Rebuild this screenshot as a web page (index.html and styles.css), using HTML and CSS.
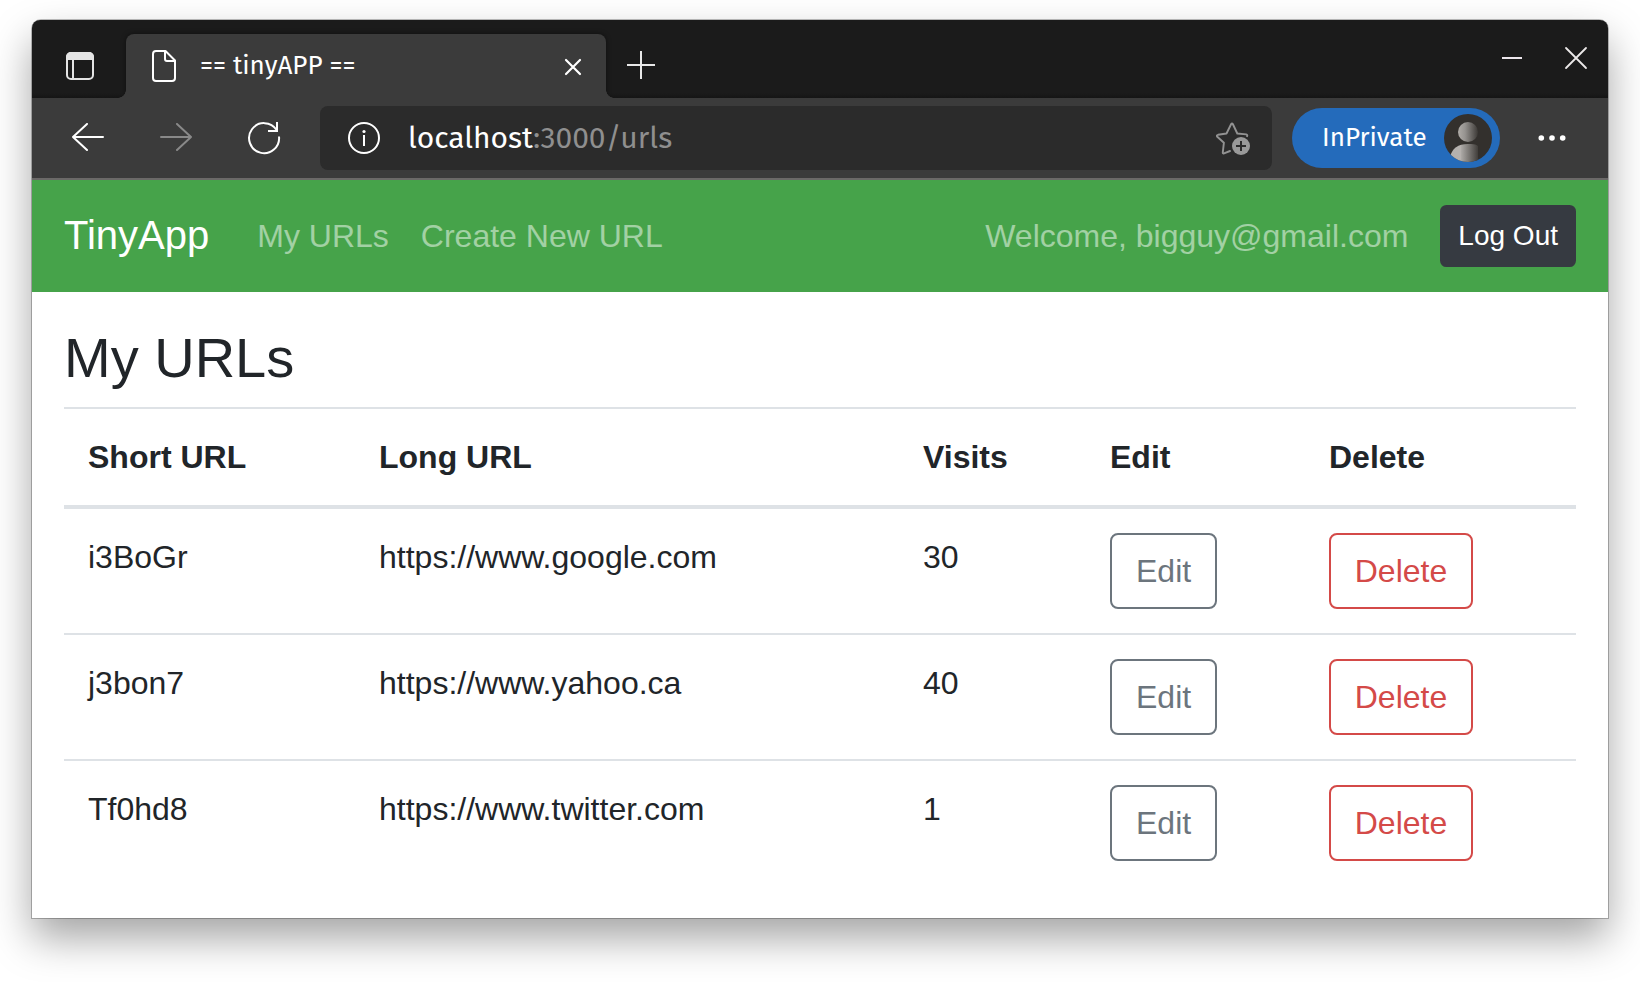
FILE: index.html
```html
<!DOCTYPE html>
<html lang="en">
<head>
<meta charset="utf-8">
<title>== tinyAPP ==</title>
<link rel="stylesheet" href="styles.css">
</head>
<body>
<div class="window">
  <div class="titlebar">
    <div class="tab-menu">
      <svg class="icon" width="28" height="28" viewBox="0 0 28 28"><rect x="1" y="1" width="26" height="26" rx="4" fill="none" stroke="#e4e4e4" stroke-width="2"/><path d="M0 8V5a5 5 0 0 1 5-5h18a5 5 0 0 1 5 5v3z" fill="#e4e4e4"/><path d="M7 8v19" stroke="#e4e4e4" stroke-width="2"/></svg>
    </div>
    <div class="tab">
      <svg class="icon" width="24" height="32" viewBox="0 0 24 32" fill="none" stroke="#fff" stroke-width="2" stroke-linejoin="round"><path d="M4 1h9.500L23 10.500V28a3 3 0 0 1-3 3H4a3 3 0 0 1-3-3V4a3 3 0 0 1 3-3z"/><path d="M13 1v8a2 2 0 0 0 2 2h8"/></svg>
      <span class="tab-title">== tinyAPP ==</span>
      <svg class="icon tab-close" width="18" height="18" viewBox="0 0 18 18" stroke="#fff" stroke-width="2.200" stroke-linecap="round"><path d="M2 2l14 14M16 2L2 16"/></svg>
    </div>
    <svg class="icon new-tab" width="28" height="28" viewBox="0 0 28 28" stroke="#e8e8e8" stroke-width="2"><path d="M14 0v28M0 14h28"/></svg>
    <div class="window-controls">
      <svg class="icon" width="20" height="24" viewBox="0 0 20 24" stroke="#ece6ec" stroke-width="2"><path d="M0 12h20"/></svg>
      <svg class="icon" width="24" height="24" viewBox="0 0 24 24" stroke="#ece9e9" stroke-width="1.800" stroke-linecap="round"><path d="M2 2l20 20M22 2L2 22"/></svg>
    </div>
  </div>
  <div class="toolbar">
    <svg class="icon back" width="32" height="28" viewBox="0 0 32 28" fill="none" stroke="#fff" stroke-width="2" stroke-linecap="round" stroke-linejoin="round"><path d="M31 14H1M15 1L1 14l14 13"/></svg>
    <svg class="icon forward" width="32" height="28" viewBox="0 0 32 28" fill="none" stroke="#898989" stroke-width="2" stroke-linecap="round" stroke-linejoin="round"><path d="M1 14h30M17 1l14 13-14 13"/></svg>
    <svg class="icon refresh" width="32" height="32" viewBox="0 0 32 32" fill="none" stroke="#fff" stroke-width="2"><path d="M28.700 8A15 15 0 1 0 31 14.500"/><path d="M29 0v9h-9"/></svg>
    <div class="address">
      <svg class="icon" width="32" height="32" viewBox="0 0 32 32" fill="none" stroke="#fff" stroke-width="2"><circle cx="16" cy="16" r="15"/><path d="M16 13v11"/><circle cx="16" cy="9.500" r="1.600" fill="#fff" stroke="none"/></svg>
      <span class="url"><span class="host">localhost</span><span class="port">:3000</span><span class="path">/urls</span></span>
      <svg class="icon star" width="34" height="34" viewBox="0 0 34 34"><path d="M14 29l-6 2.300q-1.400.5-1.200-1L7.900 20.700 1.300 14.800q-1.200-1.500.7-2l8.500-1.300L15.200 2q.8-1.200 1.600 0l4.500 9.500 9 .9q1.400.4.800 1.800" fill="none" stroke="#929292" stroke-width="1.900" stroke-linejoin="round" stroke-linecap="round"/><circle cx="25" cy="24" r="10.500" fill="#2b2b2b"/><circle cx="25" cy="24" r="9" fill="#999"/><path d="M25 19v10M20 24h10" stroke="#2b2b2b" stroke-width="2"/></svg>
    </div>
    <div class="profile">
      <span class="profile-name">InPrivate</span>
      <svg class="icon" width="48" height="48" viewBox="0 0 48 48"><defs><linearGradient id="head"><stop offset="0" stop-color="#b0aca8"/><stop offset=".35" stop-color="#969390"/><stop offset="1" stop-color="#3c3936"/></linearGradient><linearGradient id="torso" gradientUnits="userSpaceOnUse" x1="7" y1="0" x2="36" y2="0"><stop offset="0" stop-color="#b5b1ae"/><stop offset=".36" stop-color="#b5b1ae"/><stop offset=".36" stop-color="#aaa7a4"/><stop offset="1" stop-color="#34312e"/></linearGradient><clipPath id="disc"><circle cx="24" cy="24" r="24"/></clipPath></defs><circle cx="24" cy="24" r="24" fill="#33302d"/><g clip-path="url(#disc)"><circle cx="24" cy="18" r="10" fill="url(#head)"/><path d="M6 48v-5q3-13 18-13h3q5 0 7 2v16z" fill="url(#torso)"/></g></svg>
    </div>
    <svg class="icon more" width="28" height="8" viewBox="0 0 28 8" fill="#fff"><circle cx="3.300" cy="4" r="2.800"/><circle cx="14" cy="4" r="2.800"/><circle cx="24.700" cy="4" r="2.800"/></svg>
  </div>
  <nav class="navbar">
    <a class="brand">TinyApp</a>
    <a class="nav-link">My URLs</a>
    <a class="nav-link">Create New URL</a>
    <span class="welcome">Welcome, bigguy@gmail.com</span>
    <button class="btn btn-dark">Log Out</button>
  </nav>
  <main class="content">
    <h1 class="heading">My URLs</h1>
    <table class="table">
      <colgroup><col class="col-short"><col class="col-long"><col class="col-visits"><col class="col-edit"><col class="col-delete"></colgroup>
      <thead>
        <tr><th>Short URL</th><th>Long URL</th><th>Visits</th><th>Edit</th><th>Delete</th></tr>
      </thead>
      <tbody>
        <tr><td>i3BoGr</td><td>https://www.google.com</td><td>30</td><td><button class="btn btn-edit">Edit</button></td><td><button class="btn btn-delete">Delete</button></td></tr>
        <tr><td>j3bon7</td><td>https://www.yahoo.ca</td><td>40</td><td><button class="btn btn-edit">Edit</button></td><td><button class="btn btn-delete">Delete</button></td></tr>
        <tr><td>Tf0hd8</td><td>https://www.twitter.com</td><td>1</td><td><button class="btn btn-edit">Edit</button></td><td><button class="btn btn-delete">Delete</button></td></tr>
      </tbody>
    </table>
  </main>
</div>
</body>
</html>
```
FILE: styles.css
```css
* { box-sizing: border-box; }
html { background: #fff; overflow: hidden; }
body {
  margin: 0;
  padding: 20px 32px 64px;
  height: 982px;
  font: 32px/1.5 "Liberation Sans", Arial, sans-serif;
  color: #212529;
}
.icon { display: block; flex: none; }
.window {
  display: flex;
  flex-direction: column;
  height: 898px;
  background: #fff;
  border-radius: 9px 9px 0 0;
  box-shadow: 0 0 0 1px rgba(0, 0, 0, .25), 0 20px 42px rgba(0, 0, 0, .36);
}

/* Title bar */
.titlebar {
  display: flex;
  flex: none;
  height: 78px;
  background: linear-gradient(to top, #151515, #1b1b1b 5px);
  border-radius: 8px 8px 0 0;
}
.tab-menu { width: 94px; padding: 32px 0 0 34px; }
.tab {
  position: relative;
  display: flex;
  align-items: center;
  width: 480px;
  height: 64px;
  margin-top: 14px;
  padding: 0 24px 0 26px;
  background: #3b3b3b;
  border-radius: 8px 8px 0 0;
  box-shadow: 0 0 5px rgba(0, 0, 0, .5);
}
.tab::before, .tab::after {
  content: "";
  position: absolute;
  bottom: 0;
  width: 8px;
  height: 8px;
}
.tab::before { left: -8px; background: radial-gradient(circle at 0 0, transparent 7.5px, #3b3b3b 8px); }
.tab::after { right: -8px; background: radial-gradient(circle at 100% 0, transparent 7.5px, #3b3b3b 8px); }
.tab-title {
  margin: 0 0 0 24px;
  font: 26px/32px "Fira Sans", "Noto Sans", sans-serif;
  white-space: nowrap;
  color: #fff;
}
.tab-close { margin: 2px 0 0 auto; }
.new-tab { margin: 31px 0 0 21px; }
.window-controls { display: flex; gap: 42px; margin: 26px 20px 0 auto; }

/* Address toolbar */
.toolbar {
  position: relative;
  display: flex;
  align-items: center;
  flex: none;
  height: 82px;
  padding: 0 42px 0 40px;
  background: #3b3b3b;
  border-bottom: 2px solid #6b6968;
}
.back, .forward { margin-top: -2px; }
.forward { margin-left: 56px; }
.refresh { margin-left: 56px; overflow: visible; }
.address {
  display: flex;
  align-items: center;
  width: 952px;
  height: 64px;
  margin-left: 40px;
  padding: 0 22px 0 28px;
  background: #2b2b2b;
  border-radius: 8px;
}
.url {
  display: flex;
  margin: -1px 0 0 28px;
  font: 30px/40px "Fira Sans", "Noto Sans", sans-serif;
  color: #8f8f8f;
}
.host { color: #fff; }
.star { margin: 2px 0 0 auto; }
.profile {
  display: flex;
  align-items: center;
  justify-content: space-between;
  width: 208px;
  height: 60px;
  margin-left: 20px;
  padding: 0 8px 0 30px;
  background: #246bbb;
  border-radius: 30px;
}
.profile-name {
  font: 26px/36px "Fira Sans", "Noto Sans", sans-serif;
  color: #fff;
}
.more { margin-left: auto; }

/* Site navigation */
.navbar {
  display: flex;
  align-items: center;
  flex: none;
  height: 112px;
  padding: 0 32px;
  background: #46a34a;
  color: rgba(255, 255, 255, .5);
}
.brand { margin: -2px 32px 0 0; font-size: 40px; color: #fff; }
.nav-link { padding: 0 16px; }
.welcome { margin: 0 32px 0 auto; }

.btn {
  display: block;
  padding: 12px 24px;
  background: transparent;
  border: 2px solid;
  border-radius: 8px;
  font: inherit;
}
.btn-dark {
  padding: 8px 16px;
  background: #363a41;
  border-color: #363a41;
  border-radius: 6.4px;
  font-size: 28px;
  color: #fff;
}
.btn-edit { color: #6c757d; }
.btn-delete { width: 144px; padding: 12px 0; color: #d44a48; }

/* URL list */
.content { padding: 32px; }
.heading { margin: 0 0 16px; font-size: 56px; font-weight: 400; line-height: 67px; }
.table {
  width: 1512px;
  border-spacing: 0;
  table-layout: fixed;
}
.col-short { width: 291px; }
.col-long { width: 544px; }
.col-visits { width: 187px; }
.col-edit { width: 219px; }
.col-delete { width: 271px; }
.table th, .table td {
  padding: 24px;
  text-align: left;
  vertical-align: top;
  border-top: 2px solid #dee2e6;
}
.table th { border-bottom: 4px solid #dee2e6; }
.table tbody tr:first-child td { border-top: 0; }
```
